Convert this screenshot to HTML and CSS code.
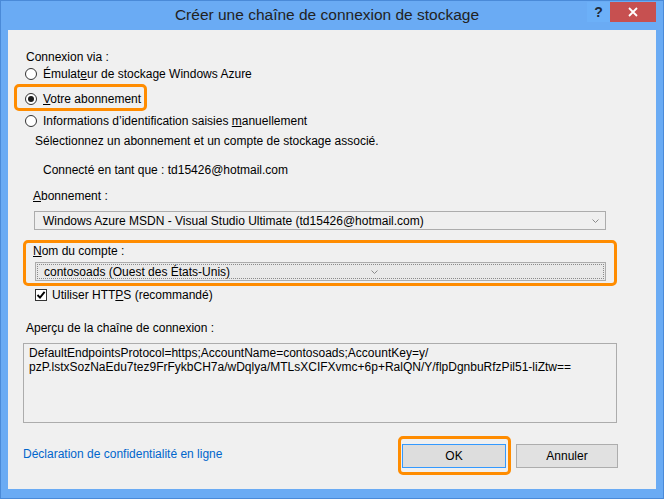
FILE: index.html
```html
<!DOCTYPE html>
<html lang="fr">
<head>
<meta charset="utf-8">
<title>Créer une chaîne de connexion de stockage</title>
<link rel="stylesheet" href="styles.css">
</head>
<body>
<div class="window">
  <div class="titlebar">
    <div class="spacer"></div>
    <div class="title">Créer une chaîne de connexion de stockage</div>
    <div class="controls">
      <span class="help">?</span>
      <span class="close"><svg width="10" height="10" viewBox="0 0 10 10"><path d="M1 1 L9 9 M9 1 L1 9" stroke="#fff" stroke-width="1.8" fill="none"/></svg></span>
    </div>
  </div>
  <div class="client">
    <div class="line lbl-conn">Connexion via :</div>
    <div class="line radio-row r1"><span class="radio"></span><span>Émulat<u>e</u>ur de stockage Windows Azure</span></div>
    <div class="hl hl-radio">
      <div class="line radio-row"><span class="radio checked"></span><span><u>V</u>otre abonnement</span></div>
    </div>
    <div class="line radio-row r3"><span class="radio"></span><span>Informations d’identification saisies <u>m</u>anuellement</span></div>
    <div class="line sub">Sélectionnez un abonnement et un compte de stockage associé.</div>
    <div class="line connected">Connecté en tant que : td15426@hotmail.com</div>
    <div class="line lbl-sub"><u>A</u>bonnement :</div>
    <div class="combo combo-sub">
      <span class="combo-text">Windows Azure MSDN - Visual Studio Ultimate (td15426@hotmail.com)</span>
      <svg class="arrow" width="7" height="4" viewBox="0 0 7 4"><polyline points="0.5,0.5 3.5,3.5 6.5,0.5" fill="none" stroke="#8a8a8a" stroke-width="1"/></svg>
    </div>
    <div class="hl hl-account">
      <div class="line lbl-acc"><u>N</u>om du compte :</div>
      <div class="combo combo-acc">
        <span class="combo-text">contosoads (Ouest des États-Unis)</span>
        <svg class="arrow" width="7" height="4" viewBox="0 0 7 4"><polyline points="0.5,0.5 3.5,3.5 6.5,0.5" fill="none" stroke="#8a8a8a" stroke-width="1"/></svg>
      </div>
    </div>
    <div class="line check-row">
      <span class="check"><svg width="10" height="10" viewBox="0 0 10 10"><path d="M1.5 5 L4 7.6 L8.6 1.8" fill="none" stroke="#000" stroke-width="1.9"/></svg></span>
      <span>Utiliser HTT<u>P</u>S (recommandé)</span>
    </div>
    <div class="line lbl-preview">Aperçu de la chaîne de connexion :</div>
    <div class="preview">DefaultEndpointsProtocol=https;AccountName=contosoads;AccountKey=y/<br>pzP.lstxSozNaEdu7tez9FrFykbCH7a/wDqlya/MTLsXCIFXvmc+6p+RalQN/Y/flpDgnbuRfzPil51-liZtw==</div>
    <div class="footer">
      <a class="link" href="#">Déclaration de confidentialité en ligne</a>
      <div class="buttons">
        <div class="hl hl-ok"><button class="btn btn-default">OK</button></div>
        <button class="btn">Annuler</button>
      </div>
    </div>
  </div>
</div>
</body>
</html>
```
FILE: styles.css
```css
* { box-sizing: border-box; }
html, body { margin: 0; padding: 0; }
body {
  width: 664px;
  height: 499px;
  overflow: hidden;
  font-family: "Liberation Sans", Arial, sans-serif;
  font-size: 12px;
  color: #000;
}
.window {
  width: 664px;
  height: 499px;
  background: #6aabf4;
  border: 1px solid #4a8ad8;
  display: flex;
  flex-direction: column;
}
.titlebar {
  height: 29px;
  display: grid;
  grid-template-columns: 1fr auto 1fr;
  align-items: start;
}
.title {
  font-size: 15.5px;
  color: #222;
  line-height: 28px;
  margin-right: 10px;
  white-space: nowrap;
}
.controls {
  justify-self: end;
  display: flex;
  margin-right: 7px;
  margin-top: 1px;
}
.help {
  width: 23px;
  height: 20px;
  display: flex;
  align-items: center;
  justify-content: center;
  font-weight: bold;
  font-size: 14px;
  color: #1e2a38;
  background: #6cb0f8;
}
.close {
  width: 46px;
  height: 20px;
  background: #c75050;
  display: flex;
  align-items: center;
  justify-content: center;
}
.client {
  margin: 0 7px;
  height: 459px;
  background: #f0f0f0;
  padding-top: 19px;
  position: relative;
}
.line {
  line-height: 16px;
  height: 16px;
  white-space: nowrap;
}
u { text-decoration: underline; text-underline-offset: 1px; }
.lbl-conn { margin-left: 18px; }
.radio-row { display: flex; align-items: center; }
.radio {
  width: 12px;
  height: 12px;
  border-radius: 50%;
  border: 1px solid #333;
  background: #fff;
  margin-right: 6px;
  display: flex;
  align-items: center;
  justify-content: center;
  flex: none;
}
.radio.checked::after {
  content: "";
  width: 6px;
  height: 6px;
  border-radius: 50%;
  background: #1b1b1b;
}
.r1 { margin-left: 17px; margin-top: 1px; }
.hl {
  border: 3px solid #ff8c00;
  border-radius: 5px;
}
.hl-radio {
  margin-left: 6px;
  margin-top: 2px;
  width: 133px;
  height: 27px;
  padding: 2px 0 0 8px;
}
.hl-radio .radio-row { height: 19px; }
.r3 { margin-left: 17px; margin-top: 2px; }
.sub { margin-left: 27px; margin-top: 4px; }
.connected { margin-left: 35px; margin-top: 13px; }
.lbl-sub { margin-left: 25px; margin-top: 10px; }
.combo {
  height: 19px;
  width: 572px;
  border: 1px solid #acacac;
  background: #efefef;
  display: flex;
  align-items: center;
  padding: 0 6px 0 8px;
  white-space: nowrap;
}
.combo-text { line-height: 16px; }
.combo-sub { margin-left: 26px; margin-top: 7px; }
.combo-sub .arrow { margin-left: auto; }
.hl-account {
  margin-left: 15px;
  margin-top: 10px;
  width: 594px;
  height: 46px;
  padding-left: 7px;
}
.combo-acc {
  margin-left: 2px;
  margin-top: 3px;
  width: 571px;
  background: #e9e9e9;
  outline: 1px dotted #8a8a8a;
  outline-offset: -3px;
}
.combo-acc .combo-text { flex: 0 0 327px; }
.check-row {
  display: flex;
  align-items: center;
  margin-left: 27px;
  margin-top: 1px;
}
.check {
  width: 12px;
  height: 12px;
  border: 1px solid #333;
  background: #fff;
  margin-right: 5px;
  display: flex;
  align-items: center;
  justify-content: center;
}
.lbl-preview { margin-left: 18px; margin-top: 17px; }
.preview {
  margin-left: 15px;
  margin-top: 7px;
  width: 594px;
  height: 80px;
  border: 1px solid #acacac;
  padding: 2px 5px;
  line-height: 14px;
  white-space: nowrap;
}
.footer {
  margin-top: 13px;
  margin-left: 15px;
  width: 595px;
  height: 39px;
  display: flex;
  align-items: center;
  justify-content: space-between;
}
.link {
  color: #0066cc;
  text-decoration: none;
  margin-top: -4px;
}
.buttons { display: flex; align-items: center; gap: 5px; }
.hl-ok {
  width: 113px;
  height: 39px;
  padding: 5px 2px 4px 1px;
}
.btn {
  font-family: inherit;
  font-size: 12px;
  color: #000;
  width: 102px;
  height: 24px;
  border: 1px solid #adadad;
  background: #e1e1e1;
  padding: 0;
  margin: 0;
}
.btn-default {
  width: 104px;
  border-color: #3399ff;
  background: #dddddd;
}
```
